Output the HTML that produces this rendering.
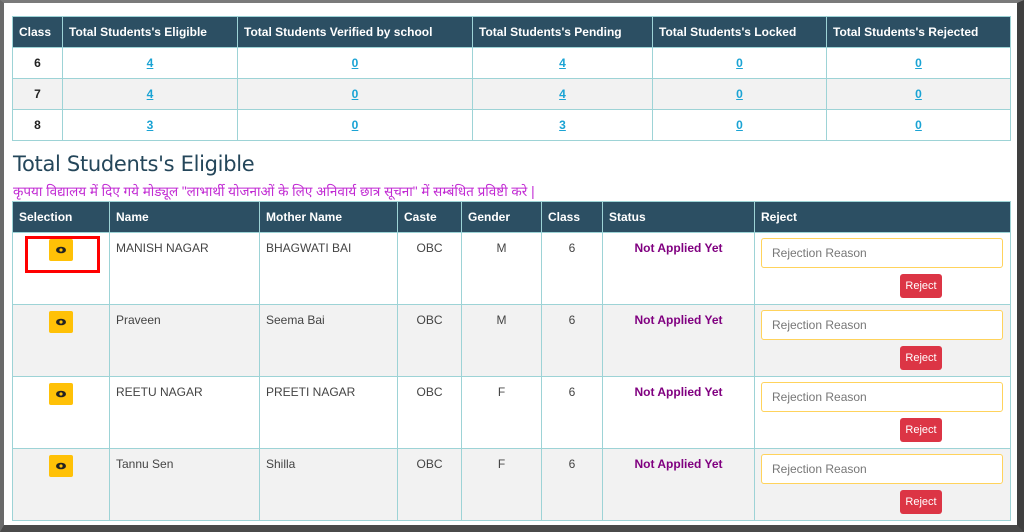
<!DOCTYPE html>
<html><head><meta charset="utf-8"><style>
*{box-sizing:border-box;margin:0;padding:0}
body{width:1024px;height:532px;background:#fff;position:relative;overflow:hidden;font-family:"Liberation Sans","Noto Sans CJK SC",sans-serif;font-size:12px;color:#333}
.frame{position:absolute;left:0;top:0;width:1024px;height:532px;border-left:4px solid #6a6a6a;border-top:3px solid #7a7a7a;border-right:7px solid #3f3f3f;border-bottom:7px solid #4a4a4a}
table{position:absolute;border-collapse:collapse;table-layout:fixed}
td,th{border:1px solid #9dd3d6}
th{background:#2c4f63;color:#fff;font-weight:bold;text-align:left;padding:0 6px;font-size:12px}
.t1{left:12px;top:16px;width:998px}
.t1 th{height:31px}
.t1 td{height:31px;text-align:center;font-weight:bold;color:#222}
.t1 td a{color:#1aa3d4;text-decoration:underline}
.g td{background:#f2f2f2}
h2{position:absolute;left:13px;top:152px;font-size:21px;font-weight:normal;color:#24465a;font-family:"DejaVu Sans","Liberation Sans",sans-serif;letter-spacing:-0.3px}
.hin{position:absolute;left:13px;top:182px;font-size:13.5px;color:#c12ad3;font-family:"Liberation Sans","Noto Sans CJK SC",sans-serif}
.t2{left:12px;top:201px;width:998px}
.t2 th{height:31px}
.t2 tr.r{height:72px}
.t2 td{height:72px;vertical-align:top;padding:8px 6px 0;font-size:12px;color:#444;overflow:hidden}
.t2 td.rj{padding:5px 6px 0}
.t2 td.c{text-align:center}
.t2 td.st{color:#800080;font-weight:bold;text-align:center}
.eye{display:block;margin:0 auto;width:24px;height:22px;background:#ffc107;border-radius:2px;position:relative;top:-2px}
.inp{border:1.5px solid #ffd35c;border-radius:3px;height:30px;padding:7px 10px;color:#777;width:242px;background:#fff}
.btn{background:#dc3545;color:#fff;width:42px;height:24px;border-radius:3px;font-size:11px;text-align:center;line-height:24px;margin:6px 0 0 139px}
.red{position:absolute;left:25px;top:236px;width:75px;height:37px;border:3px solid #f00}
</style></head><body>
<table class="t1">
<colgroup><col style="width:50px"><col style="width:175px"><col style="width:235px"><col style="width:180px"><col style="width:174px"><col style="width:184px"></colgroup>
<tr><th>Class</th><th>Total Students's Eligible</th><th>Total Students Verified by school</th><th>Total Students's Pending</th><th>Total Students's Locked</th><th>Total Students's Rejected</th></tr>
<tr><td>6</td><td><a>4</a></td><td><a>0</a></td><td><a>4</a></td><td><a>0</a></td><td><a>0</a></td></tr>
<tr class="g"><td>7</td><td><a>4</a></td><td><a>0</a></td><td><a>4</a></td><td><a>0</a></td><td><a>0</a></td></tr>
<tr><td>8</td><td><a>3</a></td><td><a>0</a></td><td><a>3</a></td><td><a>0</a></td><td><a>0</a></td></tr>
</table>
<h2>Total Students's Eligible</h2>
<div class="hin">कृपया विद्यालय में दिए गये मोड्यूल "लाभार्थी योजनाओं के लिए अनिवार्य छात्र सूचना" में सम्बंधित प्रविष्टी करे |</div>
<table class="t2">
<colgroup><col style="width:97px"><col style="width:150px"><col style="width:138px"><col style="width:64px"><col style="width:80px"><col style="width:61px"><col style="width:152px"><col style="width:256px"></colgroup>
<tr><th>Selection</th><th>Name</th><th>Mother Name</th><th>Caste</th><th>Gender</th><th>Class</th><th>Status</th><th>Reject</th></tr>
<tr class="r"><td><span class="eye"><svg width="24" height="22" viewBox="0 0 24 22"><ellipse cx="12" cy="11" rx="5" ry="3.3" fill="#222"/><circle cx="12" cy="11" r="1.6" fill="#ffc107"/></svg></span></td><td>MANISH NAGAR</td><td>BHAGWATI BAI</td><td class="c">OBC</td><td class="c">M</td><td class="c">6</td><td class="st">Not Applied Yet</td><td class="rj"><div class="inp">Rejection Reason</div><div class="btn">Reject</div></td></tr>
<tr class="r g"><td><span class="eye"><svg width="24" height="22" viewBox="0 0 24 22"><ellipse cx="12" cy="11" rx="5" ry="3.3" fill="#222"/><circle cx="12" cy="11" r="1.6" fill="#ffc107"/></svg></span></td><td>Praveen</td><td>Seema Bai</td><td class="c">OBC</td><td class="c">M</td><td class="c">6</td><td class="st">Not Applied Yet</td><td class="rj"><div class="inp">Rejection Reason</div><div class="btn">Reject</div></td></tr>
<tr class="r"><td><span class="eye"><svg width="24" height="22" viewBox="0 0 24 22"><ellipse cx="12" cy="11" rx="5" ry="3.3" fill="#222"/><circle cx="12" cy="11" r="1.6" fill="#ffc107"/></svg></span></td><td>REETU NAGAR</td><td>PREETI NAGAR</td><td class="c">OBC</td><td class="c">F</td><td class="c">6</td><td class="st">Not Applied Yet</td><td class="rj"><div class="inp">Rejection Reason</div><div class="btn">Reject</div></td></tr>
<tr class="r g"><td><span class="eye"><svg width="24" height="22" viewBox="0 0 24 22"><ellipse cx="12" cy="11" rx="5" ry="3.3" fill="#222"/><circle cx="12" cy="11" r="1.6" fill="#ffc107"/></svg></span></td><td>Tannu Sen</td><td>Shilla</td><td class="c">OBC</td><td class="c">F</td><td class="c">6</td><td class="st">Not Applied Yet</td><td class="rj"><div class="inp">Rejection Reason</div><div class="btn">Reject</div></td></tr>
</table>
<div class="red"></div>
<div class="frame"></div>
</body></html>
